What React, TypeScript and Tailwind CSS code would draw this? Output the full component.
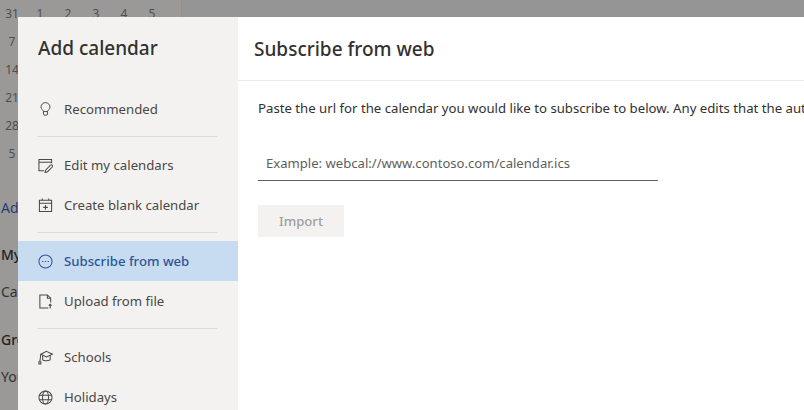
import React from 'react';

const font = 'font-["Noto_Sans","Open_Sans",sans-serif]';

function Lightbulb() {
  return (
    <svg width="13" height="15" viewBox="0 0 16 18" fill="none" stroke="#4a4846" strokeWidth="1.200">
      <path d="M5.5 11.500C5 9.500 2.500 8.500 2.500 6a5.500 5.500 0 0 1 11 0c0 2.500-2.500 3.500-3 5.500z" />
      <path d="M5.500 11.500v3a1.500 1.500 0 0 0 1.500 1.500h2a1.500 1.500 0 0 0 1.500-1.500v-3" />
    </svg>
  );
}

function EditCalendar() {
  return (
    <svg width="15" height="15" viewBox="0 0 16 16" fill="none" stroke="#4a4846" strokeWidth="1.100">
      <path d="M6.500 13.500H1v-12h13.500v4" />
      <path d="M1 4.500h13.500" />
      <path d="M7.500 15.500l.8-2.800 5-5a1.200 1.200 0 0 1 1.900 1.900l-5 5z" />
    </svg>
  );
}

function BlankCalendar() {
  return (
    <svg width="15" height="15" viewBox="0 0 16 16" fill="none" stroke="#4a4846" strokeWidth="1.100">
      <path d="M1.500 2.500h13v12h-13z" />
      <path d="M1.500 5.500h13M4.500 .5v2M11.500 .5v2M8 7.500v5M5.500 10h5" />
    </svg>
  );
}

function SubscribeIcon() {
  return (
    <svg width="15" height="15" viewBox="0 0 16 16" fill="none" stroke="#2f5597" strokeWidth="1.100">
      <circle cx="8" cy="8" r="7" />
      <path d="M4.300 8h1.400M7.300 8h1.400M10.300 8h1.400" strokeWidth="1.300" />
    </svg>
  );
}

function UploadFile() {
  return (
    <svg width="15" height="15" viewBox="0 0 16 16" fill="none" stroke="#4a4846" strokeWidth="1.100">
      <path d="M11 15H2V1h8l3.500 3.500V9" />
      <path d="M10 1v3.500h3.500M13 15.500v-4.500M11.500 12.500l1.500-1.500 1.500 1.500" />
    </svg>
  );
}

function SchoolCap() {
  return (
    <svg width="15" height="15" viewBox="0 0 16 16" fill="none" stroke="#4a4846" strokeWidth="1.100">
      <path d="M9 1.500 15.500 4.500 9 7.500 3 4.500z" />
      <path d="M5 6v4.500c1 1.300 6 1.300 8 0V5.500" />
      <path d="M3 4.500 2 12" />
      <path d="M1 12.500h2v2.500H1z" />
    </svg>
  );
}

function Globe() {
  return (
    <svg width="15" height="15" viewBox="0 0 16 16" fill="none" stroke="#4a4846" strokeWidth="1.100">
      <circle cx="8" cy="8" r="7" />
      <ellipse cx="8" cy="8" rx="3.200" ry="7" />
      <path d="M1.500 5.500h13M1.500 10.500h13" />
    </svg>
  );
}

function NavItem({ icon, label, active }: { icon: React.ReactNode; label: string; active?: boolean }) {
  return (
    <div className={`flex h-10 items-center gap-[11px] pl-[19px] text-[13.2px] ${active ? 'bg-[#c7dcf0] font-medium text-[#2f5597]' : 'text-[#4a4846]'}`}>
      <span className="flex w-4 items-center justify-center">{icon}</span>
      <span className="pt-[2px]">{label}</span>
    </div>
  );
}

function Divider() {
  return <div className="mb-2 ml-[19px] mr-[21px] mt-[7px] h-px bg-[#dbdad9]" />;
}

function Backdrop() {
  const rows = [
    ['31', '1', '2', '3', '4', '5'],
    ['7'],
    ['14'],
    ['21'],
    ['28'],
    ['5'],
  ];
  return (
    <div className="absolute inset-0 bg-[#959595]">
      <div className="h-full w-[182px] border-r border-[#8f8f8f] bg-[#9a9998] text-[12px] text-[#4f4f4f]">
        <div className="-ml-[2px] flex flex-col pt-[6px]">
          {rows.map((row, i) => (
            <div key={i} className="flex h-7 leading-4">
              {row.map((d, j) => (
                <span key={j} className="w-7 text-center">{d}</span>
              ))}
            </div>
          ))}
        </div>
        <div className="mt-[24px] pl-[1px] text-[14px] leading-5 text-[#1f3f73]">Add</div>
        <div className="mt-[27px] pl-[1px] text-[14px] font-medium leading-5 text-[#222]">My</div>
        <div className="mt-[17px] pl-[1px] text-[14px] leading-5 text-[#333]">Cal</div>
        <div className="mt-[28px] pl-[1px] text-[14px] font-medium leading-5 text-[#222]">Gro</div>
        <div className="mt-[17px] pl-[1px] text-[14px] leading-5 text-[#333]">You</div>
      </div>
    </div>
  );
}

export default function App() {
  return (
    <div className={`relative h-[410px] w-[804px] overflow-hidden ${font}`}>
      <Backdrop />
      <div className="absolute left-[18px] top-[17px] flex h-[393px] w-[786px]">
        <aside className="w-[220px] shrink-0 bg-[#f3f2f1]">
          <h2 className="h-[46px] pl-[20px] pt-[17px] text-[19px] font-medium leading-7 text-[#323130]">Add calendar</h2>
          <div className="mt-[26px]">
            <NavItem icon={<Lightbulb />} label="Recommended" />
            <Divider />
            <NavItem icon={<EditCalendar />} label="Edit my calendars" />
            <NavItem icon={<BlankCalendar />} label="Create blank calendar" />
            <Divider />
            <NavItem icon={<SubscribeIcon />} label="Subscribe from web" active />
            <NavItem icon={<UploadFile />} label="Upload from file" />
            <Divider />
            <NavItem icon={<SchoolCap />} label="Schools" />
            <NavItem icon={<Globe />} label="Holidays" />
          </div>
        </aside>
        <main className="min-w-0 flex-1 bg-white">
          <div className="h-16 border-b border-[#edebe9] pl-4 pt-[18px]">
            <h1 className="whitespace-nowrap text-[19px] font-medium leading-7 text-[#323130]">Subscribe from web</h1>
          </div>
          <div className="pl-5">
            <p className="mt-[17px] whitespace-nowrap text-[13.2px] leading-5 text-[#323130]">
              Paste the url for the calendar you would like to subscribe to below. Any edits that the author makes to this calendar will be reflected
            </p>
            <div className="mt-[27px] flex h-[36px] w-[400px] items-center border-b border-[#605e5c] pl-2 pt-[2px] text-[13.1px] text-[#605e5c]">
              Example: webcal://www.contoso.com/calendar.ics
            </div>
            <button className="mt-6 h-8 w-[86px] bg-[#f3f2f1] pt-[2px] text-[13.2px] font-medium text-[#a19f9d]">Import</button>
          </div>
        </main>
      </div>
    </div>
  );
}
